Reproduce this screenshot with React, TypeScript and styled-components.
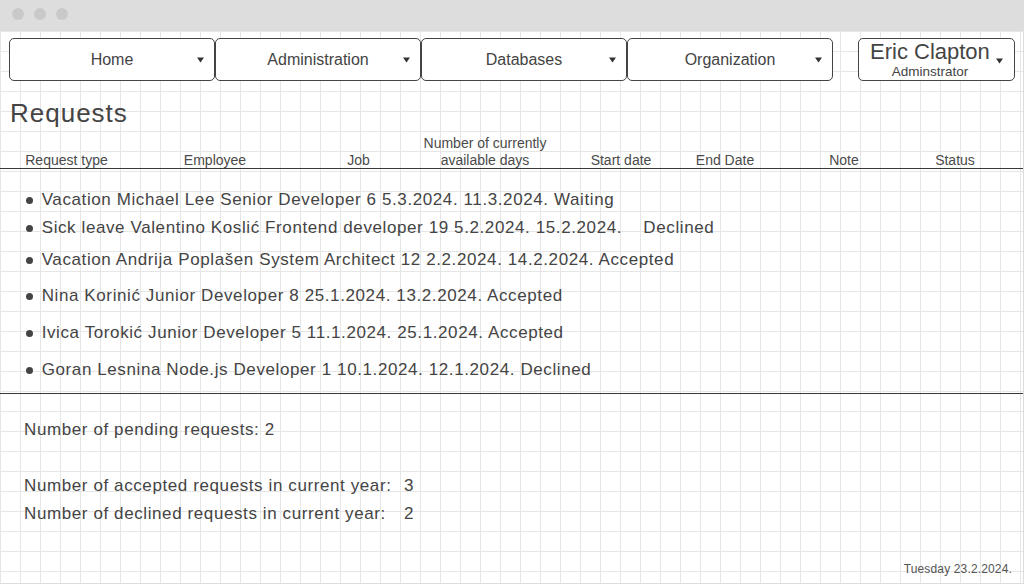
import React from 'react';
import styled, { createGlobalStyle } from 'styled-components';

const GlobalStyle = createGlobalStyle`
  html, body { margin: 0; padding: 0; background: #ffffff; }
  body { font-family: "Liberation Sans", Arial, sans-serif; color: #444444; }
  * { box-sizing: border-box; }
`;

const Window = styled.div`
  width: 1024px;
  height: 584px;
  display: flex;
  flex-direction: column;
`;

const TitleBar = styled.div`
  height: 31px;
  flex: none;
  background: #dddddd;
  display: flex;
  align-items: flex-start;
  gap: 10px;
  padding: 8px 0 0 12px;
`;

const Dot = styled.span`
  width: 12px;
  height: 12px;
  border-radius: 50%;
  background: #c9c9c9;
`;

const Canvas = styled.main`
  flex: 1;
  display: flex;
  flex-direction: column;
  border-right: 1px solid #dcdcdc;
  border-bottom: 1px solid #dcdcdc;
  background-color: #ffffff;
  background-image:
    linear-gradient(to right, #e6e6e6 1px, transparent 1px),
    linear-gradient(to bottom, #e6e6e6 1px, transparent 1px);
  background-size: 20px 20px;
  background-position: 0 0;
`;

const NavBar = styled.nav`
  display: flex;
  margin-top: 7px;
  padding-left: 9px;
  height: 43px;
`;

const NavButton = styled.div`
  width: 206px;
  height: 43px;
  border: 1px solid #444444;
  border-radius: 5px;
  background: #ffffff;
  display: grid;
  grid-template-columns: 1fr auto 1fr;
  align-items: center;
  font-size: 16px;
  color: #444444;
`;

const NavLabel = styled.span`
  grid-column: 2;
`;

const CaretSvg = styled.svg<{ $mr?: number }>`
  justify-self: end;
  display: block;
  width: 7px;
  height: 6px;
  margin-right: ${(p) => p.$mr ?? 10}px;
  fill: #333333;
`;

const Caret = ({ mr, className }: { mr?: number; className?: string }) => (
  <CaretSvg className={className} $mr={mr} viewBox="0 0 7 6">
    <polygon points="0,0.5 7,0.5 3.5,5.5" />
  </CaretSvg>
);

const UserBox = styled.div`
  margin-left: 25px;
  width: 157px;
  height: 43px;
  border: 1px solid #444444;
  border-radius: 5px;
  background: #ffffff;
  display: flex;
  align-items: flex-start;
  padding: 1px 0 0 11px;
  gap: 6px;
`;

const UserText = styled.div`
  display: flex;
  flex-direction: column;
  align-items: center;
`;

const UserName = styled.span`
  font-size: 22px;
  line-height: 24px;
  color: #444444;
`;

const UserRole = styled.span`
  padding-top: 1px;
  font-size: 13.5px;
  line-height: 14px;
  color: #444444;
`;

const UserCaret = styled(Caret)`
  align-self: center;
  margin-top: 1px;
`;

const Title = styled.h1`
  margin: 17px 0 0 0;
  padding-left: 10px;
  font-size: 26px;
  line-height: 30px;
  font-weight: normal;
  letter-spacing: 1px;
  color: #444444;
`;

const HeaderRow = styled.div`
  margin-top: 7px;
  height: 34px;
  display: grid;
  grid-template-columns: 133px 164px 123px 130px 142px 66px 172px 50px 1fr;
  align-items: end;
  border-bottom: 1px solid #3a3a3a;
`;

const HeaderCell = styled.span`
  font-size: 14px;
  line-height: 17px;
  text-align: center;
  color: #4a4a4a;
`;

const RequestList = styled.ul`
  list-style: none;
  margin: 0;
  padding: 0 0 13px 0;
  border-bottom: 1px solid #3a3a3a;
`;

const RequestItem = styled.li<{ $top: number }>`
  margin-top: ${(p) => p.$top}px;
  height: 20px;
  display: flex;
  align-items: center;
  padding-left: 26px;
  font-size: 17px;
  line-height: 20px;
  letter-spacing: 0.6px;
  white-space: pre;
  color: #444444;
`;

const Bullet = styled.span`
  width: 7px;
  height: 7px;
  border-radius: 50%;
  background: #444444;
  margin-right: 8.7px;
  flex: none;
`;

const Stats = styled.section`
  padding-left: 24px;
`;

const StatLine = styled.div<{ $top: number }>`
  margin-top: ${(p) => p.$top}px;
  display: grid;
  grid-template-columns: 380px auto;
  font-size: 17px;
  line-height: 20px;
  letter-spacing: 0.6px;
  color: #444444;
`;

const PendingLine = styled.div`
  margin-top: 26px;
  font-size: 17px;
  line-height: 20px;
  letter-spacing: 0.6px;
  color: #444444;
`;

const DateStamp = styled.footer`
  margin-top: auto;
  align-self: flex-end;
  padding: 0 11px 6px 0;
  font-size: 12px;
  letter-spacing: 0.15px;
  line-height: 16px;
  color: #555555;
`;

const navItems = ['Home', 'Administration', 'Databases', 'Organization'];

const headers: React.ReactNode[] = [
  'Request type',
  'Employee',
  'Job',
  <>Number of currently<br />available days</>,
  'Start date',
  'End Date',
  'Note',
  'Status',
];

const requests: { text: string; top: number }[] = [
  { text: 'Vacation Michael Lee Senior Developer 6 5.3.2024. 11.3.2024. Waiting', top: 21 },
  { text: 'Sick leave Valentino Koslić Frontend developer 19 5.2.2024. 15.2.2024.    Declined', top: 8 },
  { text: 'Vacation Andrija Poplašen System Architect 12 2.2.2024. 14.2.2024. Accepted', top: 12 },
  { text: 'Nina Korinić Junior Developer 8 25.1.2024. 13.2.2024. Accepted', top: 16 },
  { text: 'Ivica Torokić Junior Developer 5 11.1.2024. 25.1.2024. Accepted', top: 17 },
  { text: 'Goran Lesnina Node.js Developer 1 10.1.2024. 12.1.2024. Declined', top: 17 },
];

export default function App() {
  return (
    <>
      <GlobalStyle />
      <Window>
        <TitleBar>
          <Dot />
          <Dot />
          <Dot />
        </TitleBar>
        <Canvas>
          <NavBar>
            {navItems.map((n) => (
              <NavButton key={n}>
                <NavLabel>{n}</NavLabel>
                <Caret />
              </NavButton>
            ))}
            <UserBox>
              <UserText>
                <UserName>Eric Clapton</UserName>
                <UserRole>Adminstrator</UserRole>
              </UserText>
              <UserCaret mr={0} />
            </UserBox>
          </NavBar>
          <Title>Requests</Title>
          <HeaderRow>
            {headers.map((h, i) => (
              <HeaderCell key={i}>{h}</HeaderCell>
            ))}
          </HeaderRow>
          <RequestList>
            {requests.map((r) => (
              <RequestItem key={r.text} $top={r.top}>
                <Bullet />
                {r.text}
              </RequestItem>
            ))}
          </RequestList>
          <Stats>
            <PendingLine>Number of pending requests: 2</PendingLine>
            <StatLine $top={36}>
              <span>Number of accepted requests in current year:</span>
              <span>3</span>
            </StatLine>
            <StatLine $top={8}>
              <span>Number of declined requests in current year:</span>
              <span>2</span>
            </StatLine>
          </Stats>
          <DateStamp>Tuesday 23.2.2024.</DateStamp>
        </Canvas>
      </Window>
    </>
  );
}
